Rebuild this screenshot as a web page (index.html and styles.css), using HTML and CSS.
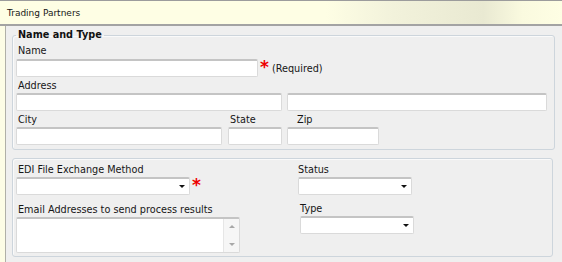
FILE: index.html
```html
<!DOCTYPE html>
<html lang="en">
  <head>
    <meta charset="UTF-8" />
    <title>Trading Partners</title>
    <link rel="stylesheet" href="styles.css">
  </head>
  <body>
    <div class="titlebar">Trading Partners</div>
    <div class="panel">
      <fieldset class="group group-name">
        <legend>Name and Type</legend>
        <div class="field">
          <label class="label label-name">Name</label>
          <div class="row">
            <input class="input w-name" type="text" />
            <span class="req">*</span>
            <span class="hint">(Required)</span>
          </div>
        </div>
        <div class="field">
          <label class="label">Address</label>
          <div class="row">
            <input class="input w-addr1" type="text" />
            <input class="input w-addr2" type="text" />
          </div>
        </div>
        <div class="row row-city">
          <div class="field w-city">
            <label class="label">City</label>
            <input class="input" type="text" />
          </div>
          <div class="field w-state">
            <label class="label">State</label>
            <input class="input" type="text" />
          </div>
          <div class="field w-zip">
            <label class="label label-zip">Zip</label>
            <input class="input" type="text" />
          </div>
        </div>
      </fieldset>

      <fieldset class="group group-exchange">
        <div class="col">
          <label class="label">EDI File Exchange Method</label>
          <div class="row">
            <div class="select w-edi"></div>
            <span class="req">*</span>
          </div>
          <label class="label label-email">Email Addresses to send process results</label>
          <div class="textbox">
            <div class="textbox-body"></div>
            <div class="scrollbar">
              <span class="arrow arrow-up"></span>
              <span class="arrow arrow-down"></span>
            </div>
          </div>
        </div>
        <div class="col col-right">
          <label class="label label-plain">Status</label>
          <div class="select w-status"></div>
          <div class="field-type">
            <label class="label label-plain label-type">Type</label>
            <div class="select w-status"></div>
          </div>
        </div>
      </fieldset>
    </div>
  </body>
</html>
```

FILE: styles.css
```css
body {
  margin: 0;
  background: #fdfde6;
  font-family: "DejaVu Sans", Verdana, sans-serif;
  font-size: 9.7px;
  color: #161616;
}
.titlebar {
  height: 21px;
  padding-top: 2px;
  padding-left: 7px;
  line-height: 21px;
  font-size: 9px;
  border-top: 1px solid #9c9c9c;
  border-bottom: 2px solid #a3a3a3;
  background: linear-gradient(
    to right,
    #fefee4 0%,
    #fefee4 58%,
    #f2f2db 70%,
    #e9e9d2 86%,
    #fafadf 93%,
    #fefee4 100%
  );
}
.panel {
  margin-left: 5px;
  border-left: 1px solid #b0b0a8;
  background: #efefef;
  padding: 2px 6px 5px 6px;
}
.group {
  box-sizing: border-box;
  margin: 0;
  border: 1px solid #cdd5dc;
  border-radius: 3px;
  box-shadow: inset 1px 1px 0 #fafafa;
}
.group-name {
  width: 543px;
  padding: 3px 6px 4px 3px;
}
.group-name legend {
  padding: 0 2px;
  line-height: 14px;
  font-weight: bold;
  color: #111;
}
.group-exchange {
  width: 541px;
  margin-top: 8px;
  padding: 5px 6px 3px 3px;
  display: grid;
  grid-template-columns: 282px 1fr;
}
.field {
  margin-bottom: 3px;
}
.row-city .field {
  margin-bottom: 0;
}
.label {
  display: block;
  height: 12px;
  line-height: 12px;
  padding-left: 2px;
  margin-bottom: 1px;
  white-space: nowrap;
}
.label-name {
  margin-bottom: 2px;
}
.label-zip {
  padding-left: 10px;
}
.label-plain {
  padding-left: 0;
}
.label-email {
  margin-top: 9px;
}
.field-type {
  margin-top: 8px;
  margin-left: 2px;
}
.row {
  display: flex;
  align-items: flex-start;
}
.input,
.select,
.textbox {
  box-sizing: border-box;
  display: block;
  height: 18px;
  margin: 0;
  padding: 0;
  background: #fff;
  border: 1px solid #dadada;
  border-top: 2px solid #c4c4c4;
  border-radius: 2px;
}
.w-name {
  width: 242px;
}
.w-addr1 {
  width: 266px;
}
.w-addr2 {
  width: 260px;
  margin-left: 5px;
}
.w-city {
  width: 206px;
}
.w-state {
  width: 54px;
  margin-left: 6px;
}
.w-zip {
  width: 92px;
  margin-left: 5px;
}
.row-city .input {
  width: 100%;
}
.req {
  margin-left: 2px;
  color: #ee0000;
  font-weight: bold;
  font-size: 17px;
  line-height: 17px;
  margin-top: 0;
}
.hint {
  margin-left: 3px;
  line-height: 12px;
  margin-top: 4px;
}
.select {
  position: relative;
}
.select::after {
  content: "";
  position: absolute;
  right: 4px;
  top: 6px;
  border-left: 3px solid transparent;
  border-right: 3px solid transparent;
  border-top: 3px solid #111;
}
.w-edi {
  width: 174px;
}
.w-status {
  width: 114px;
}
.textbox {
  width: 224px;
  height: 36px;
  display: flex;
}
.textbox-body {
  flex: 1;
}
.scrollbar {
  width: 15px;
  background: #f6f6f6;
  border-left: 1px solid #e6e6e6;
  display: flex;
  flex-direction: column;
  justify-content: space-between;
  align-items: center;
  padding: 6px 0 6px;
}
.arrow {
  width: 0;
  height: 0;
  border-left: 3px solid transparent;
  border-right: 3px solid transparent;
}
.arrow-up {
  border-bottom: 3px solid #a8a8a8;
}
.arrow-down {
  border-top: 3px solid #a8a8a8;
}
```
